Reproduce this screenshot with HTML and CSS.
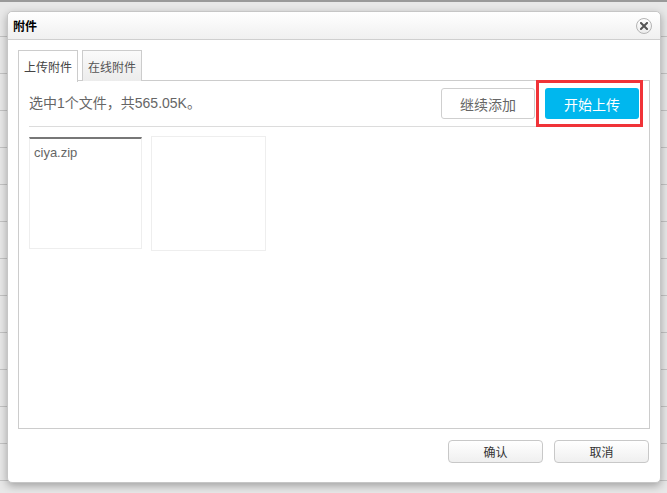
FILE: index.html
```html
<!DOCTYPE html>
<html lang="zh-CN">
<head>
    <meta charset="UTF-8">
    <title>附件</title>
    <link rel="stylesheet" href="styles.css">
</head>
<body>
    <div class="dialog">
        <div class="dialog-head">
            <span class="dialog-title">附件</span>
            <span class="close-btn">
                <svg width="8" height="8" viewBox="0 0 8 8"><path d="M1 1L7 7M7 1L1 7" stroke="#555" stroke-width="2" stroke-linecap="square"/></svg>
            </span>
        </div>
        <div class="dialog-body">
            <div class="tabs">
                <span class="tab active">上传附件</span>
                <span class="tab">在线附件</span>
            </div>
            <div class="panel">
                <div class="status-bar">
                    <span class="info">选中1个文件，共565.05K。</span>
                    <div class="btns">
                        <span class="btn add-btn">继续添加</span>
                        <span class="btn upload-btn">开始上传</span>
                    </div>
                    <span class="mark"></span>
                </div>
                <div class="file-list">
                    <div class="file-item current">ciya.zip</div>
                    <div class="file-item empty"></div>
                </div>
            </div>
        </div>
        <div class="dialog-foot">
            <span class="foot-btn">确认</span>
            <span class="foot-btn">取消</span>
        </div>
    </div>
</body>
</html>
```

FILE: styles.css
```css
body {
    margin: 0;
    height: 493px;
    box-sizing: border-box;
    padding: 11px 0 0 7px;
    background-color: #e8e8e8;
    border-top: 2px solid #9a9a9a;
    background-image: repeating-linear-gradient(to bottom, transparent 0, transparent 36px, #c4c4c4 36px, #c4c4c4 37px);
    font-family: "Liberation Sans", "Noto Sans CJK SC", sans-serif;
    overflow: hidden;
}

.dialog {
    width: 654px;
    height: 472px;
    margin-top: -2px;
    box-sizing: border-box;
    display: flex;
    flex-direction: column;
    background-color: #fff;
    border: 1px solid #c6c6c6;
    border-radius: 5px;
    box-shadow: 0 3px 8px rgba(0, 0, 0, 0.3);
}

.dialog-head {
    height: 27px;
    display: flex;
    align-items: center;
    justify-content: space-between;
    padding: 0 8px 0 5px;
    border-bottom: 1px solid #cfcfcf;
    border-radius: 5px 5px 0 0;
    background: linear-gradient(#ffffff, #f0f0f0);
}

.dialog-title {
    font-size: 12px;
    font-weight: bold;
    color: #000;
}

.close-btn {
    width: 14px;
    height: 14px;
    border: 1px solid #b4b4b4;
    border-radius: 50%;
    background: linear-gradient(#ffffff, #ececec);
    display: flex;
    align-items: center;
    justify-content: center;
}

.dialog-body {
    flex: 1;
    display: flex;
    flex-direction: column;
    padding: 10px 10px 0 10px;
}

.tabs {
    display: flex;
    gap: 4px;
    height: 31px;
    margin-bottom: -1px;
    position: relative;
    z-index: 1;
}

.tab {
    width: 60px;
    box-sizing: border-box;
    height: 31px;
    border: 1px solid #ccc;
    border-bottom: none;
    font-size: 12px;
    color: #555;
    display: flex;
    align-items: center;
    justify-content: center;
    background: linear-gradient(#fafafa, #ececec);
}

.tab.active {
    background: #fff;
    height: 32px;
    color: #444;
}

.panel {
    flex: 1;
    width: 632px;
    box-sizing: border-box;
    border: 1px solid #ccc;
    padding: 0 10px;
}

.status-bar {
    position: relative;
    height: 38px;
    padding-top: 7px;
    display: flex;
    justify-content: space-between;
    align-items: flex-start;
    border-bottom: 1px solid #dcdcdc;
}

.info {
    font-size: 14px;
    color: #666;
    line-height: 31px;
}

.btns {
    display: flex;
    gap: 10px;
}

.btn {
    width: 94px;
    height: 31px;
    box-sizing: border-box;
    border-radius: 3px;
    font-size: 14px;
    display: flex;
    align-items: center;
    justify-content: center;
}

.add-btn {
    border: 1px solid #cfcfcf;
    color: #666;
    background: #fff;
}

.upload-btn {
    background: #00b7ee;
    color: #fff;
}

.mark {
    position: absolute;
    right: -4px;
    top: -1px;
    width: 107px;
    height: 47px;
    box-sizing: border-box;
    border: 3px solid #f03338;
}

.file-list {
    display: flex;
    gap: 9px;
    padding-top: 9px;
}

.file-item {
    width: 113px;
    height: 113px;
    box-sizing: border-box;
    border: 1px solid #eee;
    font-size: 13px;
    color: #666;
    padding: 6px 4px;
}

.file-item.current {
    border-top: 2px solid #777;
    margin-top: 1px;
    height: 112px;
}

.file-item.empty {
    width: 115px;
    height: 115px;
}

.dialog-foot {
    display: flex;
    justify-content: flex-end;
    gap: 11px;
    padding: 11px 11px 19px 0;
}

.foot-btn {
    width: 95px;
    height: 23px;
    box-sizing: border-box;
    border: 1px solid #c8c8c8;
    border-radius: 4px;
    background: linear-gradient(#ffffff, #efefef);
    font-size: 12px;
    color: #333;
    display: flex;
    align-items: center;
    justify-content: center;
}
```
